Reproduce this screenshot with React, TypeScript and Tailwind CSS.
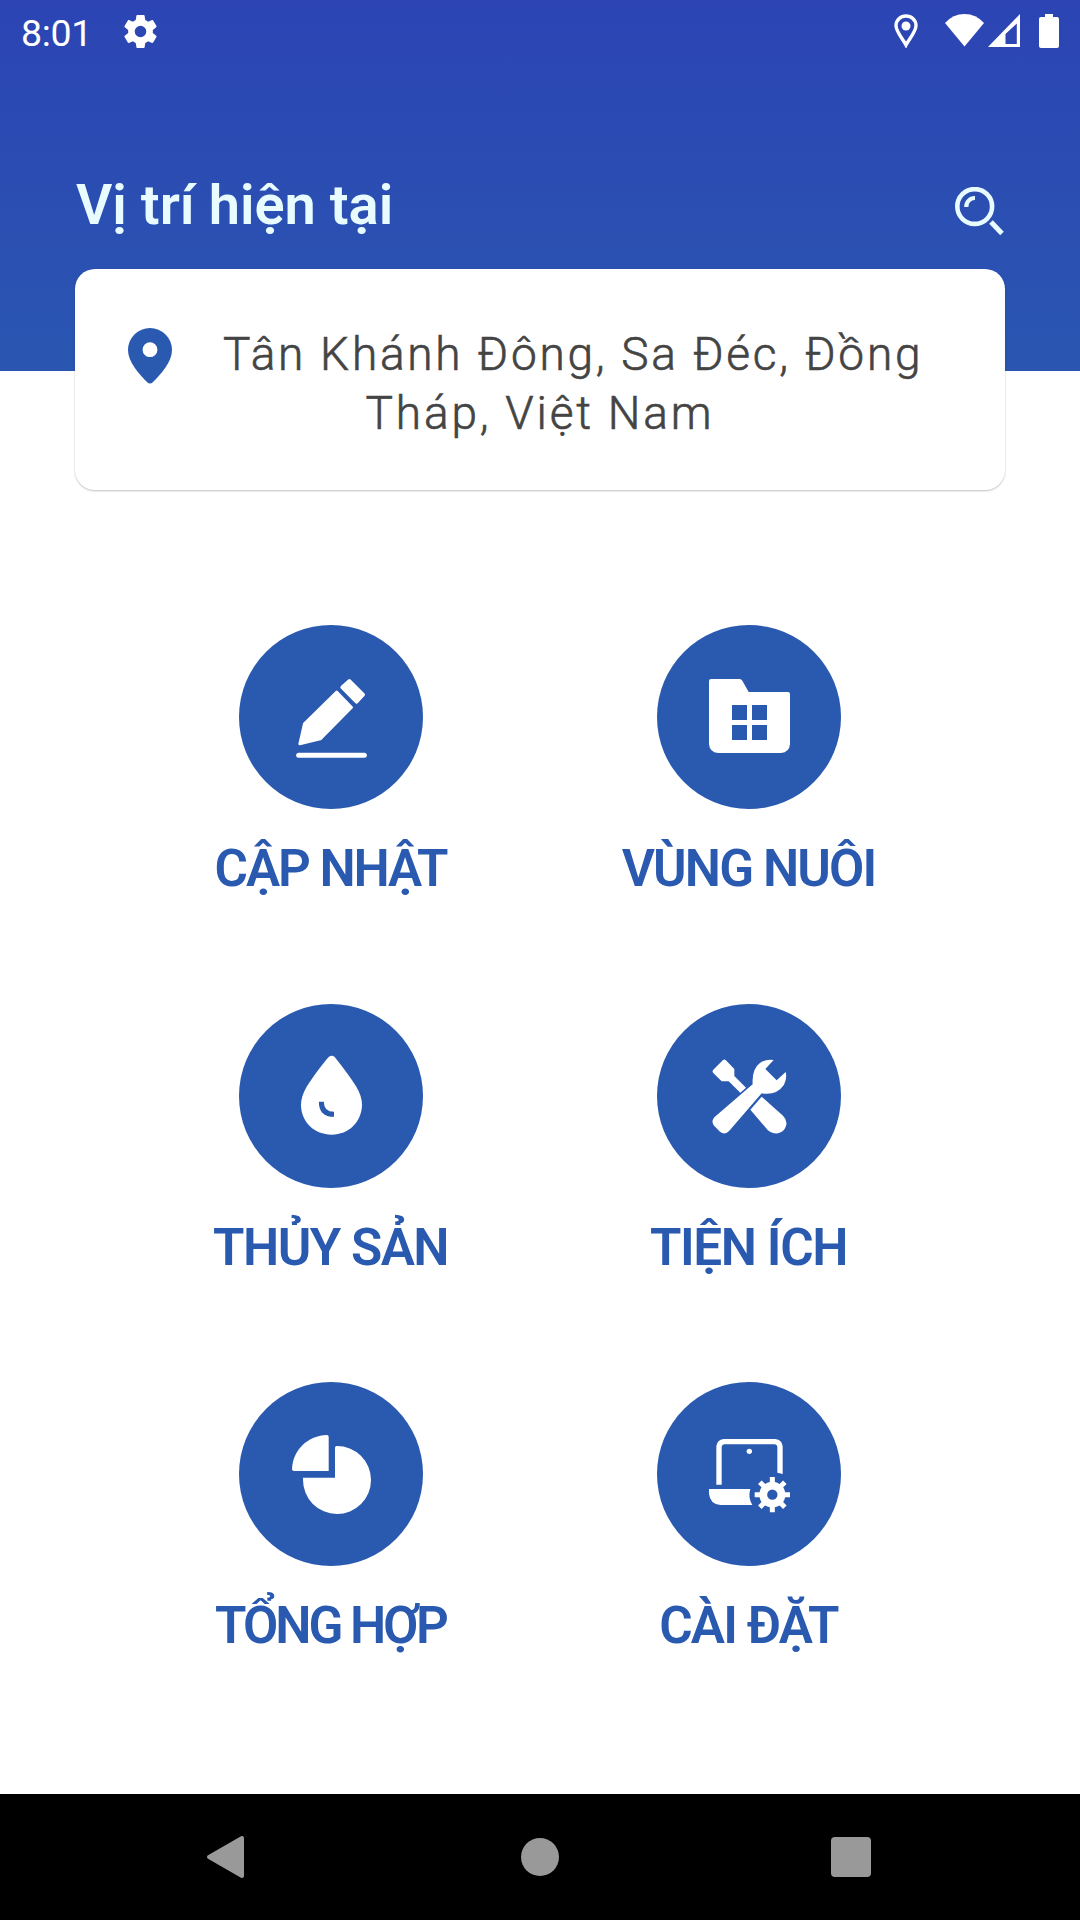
import type { ReactNode } from "react";

type Tile = { label: string; tracking: string; icon: ReactNode };

const BLUE = "#2a59b0";

const PencilIcon = () => (
  <svg viewBox="117 45 552 552" className="size-full" fill="white" stroke="white" strokeLinejoin="round">
    <path d="M448 212L490 254L470 276L426 232Z" strokeWidth="10" />
    <path d="M410 246L455 292L361 387L299 402L313 341Z" strokeWidth="8" />
    <path d="M296 436H493" strokeWidth="15" strokeLinecap="round" />
  </svg>
);

const FolderIcon = () => (
  <svg viewBox="141 45 552 552" className="size-full" fill="white">
    <path d="M303 207H389Q394 207 397 212L416 246H534Q540 246 540 252V403Q538 427 513 429H324Q299 427 297 403V213Q297 207 303 207Z" />
    <path fill={BLUE} d="M366 285h45v45h-45zM426 285h45v45h-45zM366 345h45v45h-45zM426 345h45v45h-45z" />
  </svg>
);

const DropIcon = () => (
  <svg viewBox="117 42 552 552" className="size-full" fill="white">
    <path d="M386 201Q395 194 404 201C428 230 451 262 468 289Q486 318 486 346C484 397 446 434 395 434C343 434 304 397 303 346Q303 318 321 289C338 262 362 229 386 201Z" />
    <path d="M364 335Q364 373 402 373" fill="none" stroke={BLUE} strokeWidth="15" />
  </svg>
);

const ToolsIcon = () => (
  <svg viewBox="141 42 552 552" className="size-full" fill="white">
    <path d="M339 210Q343 207 347 210L373 237V258L408 293L391 308L356 274H335L309 248Q306 244 309 240Z" />
    <path d="M455 320L519 377Q533 391 528 408Q522 426 504 430Q486 432 473 420L421 359Z" />
    <path d="M491 210L466 237L500 271L527 246Q532 265 522 284Q500 317 455 310L358 422Q344 437 330 425L313 408Q302 396 313 382L428 283Q425 238 449 220Q467 206 491 210Z" />
  </svg>
);

const PieIcon = () => (
  <svg viewBox="117 36 552 552" className="size-full" fill="white">
    <path d="M381 195Q386 195 386 200V303H282Q276 303 276 297C278 240 324 196 381 195Z" />
    <path d="M405 323V233Q405 228 410 228A102 102 0 1 1 309 329V323Z" />
  </svg>
);

const LaptopIcon = () => (
  <svg viewBox="141 36 552 552" className="size-full" fill="white">
    <path d="M319 344V229Q321 209 341 207H496Q516 209 518 229V312L502 308V231Q501 223 493 223H343Q336 223 335 231V344Z" />
    <circle cx="418" cy="244" r="8" />
    <path d="M297 357H421Q413 383 427 405H331Q300 402 297 371Z" />
    <g transform="translate(487 374)">
      <path
        d="M0 -53V53M-53 0H53M-37.500 -37.500L37.500 37.500M-37.500 37.500L37.500 -37.500"
        stroke="white"
        strokeWidth="15"
      />
      <circle r="39" />
      <circle r="15.500" fill={BLUE} />
    </g>
  </svg>
);

const tiles: Tile[] = [
  { label: "CẬP NHẬT", tracking: "tracking-[-2.1px]", icon: <PencilIcon /> },
  { label: "VÙNG NUÔI", tracking: "tracking-[-1.9px]", icon: <FolderIcon /> },
  { label: "THỦY SẢN", tracking: "tracking-[-1.5px]", icon: <DropIcon /> },
  { label: "TIỆN ÍCH", tracking: "tracking-[-1.4px]", icon: <ToolsIcon /> },
  { label: "TỔNG HỢP", tracking: "tracking-[-3px]", icon: <PieIcon /> },
  { label: "CÀI ĐẶT", tracking: "tracking-[-1.8px]", icon: <LaptopIcon /> },
];

function StatusBar() {
  return (
    <div className="flex h-[63px] items-start text-white">
      <span className="ml-[21px] mt-[12px] w-[70px] whitespace-nowrap text-[37.5px] leading-[42px] tracking-[-0.3px]">8:01</span>
      <svg viewBox="2 2 20 20" className="ml-[33px] mt-[15px] h-[33px] w-[33px]" fill="currentColor">
        <path d="M19.430 12.980c.04-.32.07-.64.07-.98s-.03-.66-.07-.98l2.110-1.650c.19-.15.24-.42.12-.64l-2-3.460c-.12-.22-.39-.3-.61-.22l-2.490 1c-.52-.4-1.080-.73-1.690-.98l-.38-2.650C14.460 2.180 14.250 2 14 2h-4c-.25 0-.46.18-.49.42l-.38 2.650c-.61.25-1.170.59-1.690.98l-2.490-1c-.23-.09-.49 0-.61.22l-2 3.460c-.13.22-.07.49.12.64l2.110 1.650c-.04.32-.07.65-.07.98s.03.66.07.98l-2.110 1.650c-.19.15-.24.42-.12.64l2 3.460c.12.22.39.3.61.22l2.490-1c.52.4 1.080.73 1.690.98l.38 2.650c.03.24.24.42.49.42h4c.25 0 .46-.18.49-.42l.38-2.650c.61-.25 1.170-.59 1.690-.98l2.490 1c.23.09.49 0 .61-.22l2-3.460c.12-.22.07-.49-.12-.64zM12 15.500a3.500 3.500 0 1 1 0-7 3.500 3.500 0 0 1 0 7z" />
      </svg>
      <div className="ml-auto mr-[21px] mt-[14px] flex">
        <svg viewBox="0 0 24 34" className="mr-[27px] h-[34px] w-[24px]" fill="none">
          <path d="M12 31C9 25 2 18 2 11.500A10 9.500 0 0 1 22 11.500C22 18 15 25 12 31Z" stroke="white" strokeWidth="3.400" />
          <circle cx="12" cy="12" r="4.500" fill="white" />
        </svg>
        <svg viewBox="0 0 39 34" className="mr-[4px] h-[34px] w-[39px]" fill="white">
          <path d="M0 9Q8 0 19.500 0T39 9L19.500 32.500Z" />
        </svg>
        <svg viewBox="0 0 33 34" className="mr-[18px] h-[34px] w-[33px]" fill="white">
          <path fillRule="evenodd" d="M0 33L32 0V33ZM17.500 18V30H28.800V9.500L17.500 20Z" />
        </svg>
        <svg viewBox="0 0 20 34" className="h-[34px] w-[20px]" fill="white">
          <path d="M6 0H14V3H18Q20 3 20 5V32Q20 34 18 34H2Q0 34 0 32V5Q0 3 2 3H6Z" />
        </svg>
      </div>
    </div>
  );
}

export default function App() {
  return (
    <div className="flex h-[1920px] w-[1080px] flex-col overflow-hidden bg-white font-['Roboto',sans-serif]">
      <header className="h-[371px] shrink-0 bg-linear-to-b from-[#2c44b4] to-[#2a56b1]">
        <StatusBar />
        <div className="mt-[110px] flex items-start justify-between pl-[76px] pr-[75px]">
          <h1 className="whitespace-nowrap text-[56px] font-semibold leading-[64px] text-[#e8fbff]">Vị trí hiện tại</h1>
          <svg viewBox="0 0 50 50" className="mt-[14px] h-[50px] w-[50px]" fill="none" stroke="#e8fbff">
            <circle cx="19.700" cy="19.500" r="17.400" strokeWidth="4.600" />
            <path d="M11.300 20A8.500 8.500 0 0 1 20 11" strokeWidth="4.200" />
            <path d="M36 35L47 46.500" strokeWidth="5" />
          </svg>
        </div>
      </header>

      <section className="mx-[75px] -mt-[102px] h-[221px] shrink-0 rounded-[20px] bg-white pt-[56px] text-[46px] font-light leading-[59px] text-[#444444] shadow-[0_1px_2px_rgba(0,0,0,0.25)] [-webkit-text-stroke:0.6px_#444444]">
        <div className="flex items-start">
          <svg viewBox="0 0 44 56" className="ml-[53px] mt-[3px] h-[56px] w-[44px]">
            <path fill={BLUE} d="M22 0A22 22 0 0 1 44 22C44 34 33 46 24.500 54.500Q22 56.500 19.500 54.500C11 46 0 34 0 22A22 22 0 0 1 22 0Z" />
            <circle cx="22" cy="21.700" r="7.400" fill="white" />
          </svg>
          <span className="ml-[51px] whitespace-nowrap tracking-[2.75px]">Tân Khánh Đông, Sa Đéc, Đồng</span>
        </div>
        <div className="text-center tracking-[2.8px]">Tháp, Việt Nam</div>
      </section>

      <main className="mt-[135px] grid grid-cols-[418px_418px] auto-rows-[378.5px] justify-center">
        {tiles.map((tile) => (
          <button key={tile.label} className="flex flex-col items-center">
            <span className="block size-[184px] shrink-0 overflow-hidden rounded-full bg-[#2a59b0]">{tile.icon}</span>
            <span className={`-ml-px mt-[30px] whitespace-nowrap text-[51.2px] font-semibold leading-[60px] text-[#2a59b0] ${tile.tracking}`}>
              {tile.label}
            </span>
          </button>
        ))}
      </main>

      <nav className="mt-auto flex h-[126px] shrink-0 items-center justify-between bg-black pl-[206px] pr-[209px]">
        <svg viewBox="0 0 38 44" className="h-[44px] w-[38px]" fill="#999999" stroke="#999999" strokeWidth="4" strokeLinejoin="round">
          <path d="M3 22L36 3V41Z" />
        </svg>
        <span className="ml-[5px] size-[38px] rounded-full bg-[#999999]" />
        <span className="size-[40px] rounded-[4px] bg-[#999999]" />
      </nav>
    </div>
  );
}
